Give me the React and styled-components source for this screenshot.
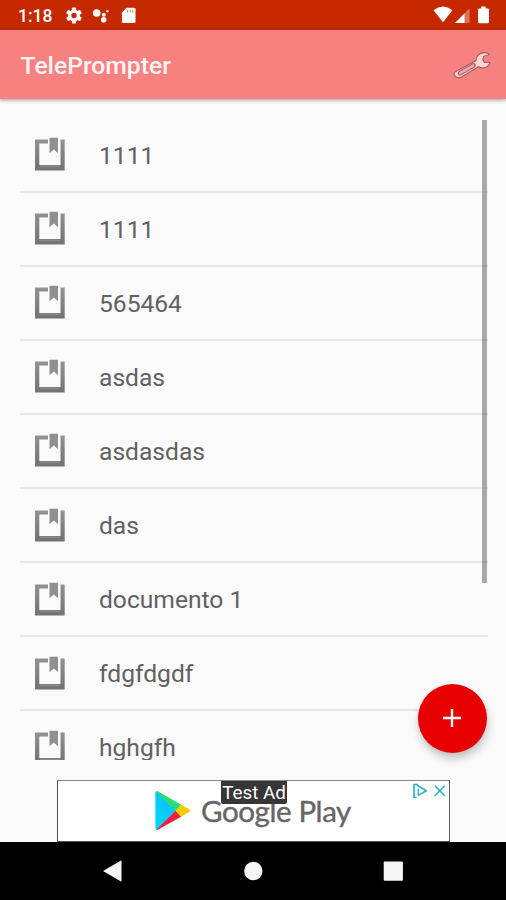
import React from 'react';
import styled, { createGlobalStyle } from 'styled-components';

const GlobalStyle = createGlobalStyle`
  * {
    box-sizing: border-box;
  }

  body {
    margin: 0;
    font-family: Roboto, "Liberation Sans", sans-serif;
    background-color: #fafafa;
  }
`;

const Screen = styled.div`
  position: relative;
  display: flex;
  flex-direction: column;
  width: 506px;
  height: 900px;
  overflow: hidden;
  background-color: #fafafa;
`;

const StatusBar = styled.div`
  display: flex;
  justify-content: space-between;
  flex: none;
  height: 30px;
  padding-left: 18px;
  background-color: #c62800;
  color: white;

  svg {
    display: block;
  }
`;

const Clock = styled.span`
  width: 47px;
  font-size: 17.5px;
  font-weight: 500;
  line-height: 32px;
`;

const StatusGroup = styled.div`
  display: flex;
`;

const AppBar = styled.header`
  display: flex;
  align-items: center;
  justify-content: space-between;
  flex: none;
  height: 68.5px;
  padding: 3px 13px 0 20.5px;
  background-color: #f78080;
  box-shadow: 0 1px 4px rgba(0, 0, 0, 0.4);
`;

const Title = styled.h1`
  margin: 0;
  color: #fff5f3;
  font-size: 24.7px;
  font-weight: 500;
  line-height: 30px;
`;

const Content = styled.main`
  display: flex;
  flex: none;
  height: 641.5px;
  margin: 20px 18px 0 20px;
  overflow: hidden;
`;

const List = styled.ul`
  flex: 1;
  margin: 0;
  padding: 0;
  list-style: none;
`;

const Item = styled.li`
  display: flex;
  align-items: center;
  height: 74.1px;
  padding: 0 0 0 14px;
  border-bottom: 2px solid #e6e6e6;
  color: #616161;

  svg {
    flex: none;
    margin: 0 33px 1px 0;
  }
`;

const ItemText = styled.span`
  padding-top: 2px;
  font-size: 24.6px;
  line-height: 32px;
`;

/* Drawn over the right end of the dividers */
const ScrollThumb = styled.div`
  flex: none;
  width: 5px;
  height: 463px;
  margin: 1px 1px 0 -6px;
  background-color: rgba(0, 0, 0, 0.32);
`;

const AddButton = styled.button`
  position: absolute;
  right: 19px;
  bottom: 147px;
  display: flex;
  align-items: center;
  justify-content: center;
  width: 69px;
  height: 69px;
  padding: 0 1px 1px 0;
  border: none;
  border-radius: 50%;
  background-color: #e60000;
  box-shadow: 1px 6px 8px rgba(0, 0, 0, 0.2), 0 1px 4px rgba(0, 0, 0, 0.06);
`;

const Ad = styled.div`
  position: relative;
  display: flex;
  align-items: center;
  flex: none;
  width: 393px;
  height: 62px;
  margin: 19.5px auto 0 57px;
  padding-left: 96px;
  border: 1px solid #555;
  border-top-color: #888;
  background-color: white;
`;

const AdText = styled.span`
  margin: 1px 0 0 9px;
  color: #666;
  font-family: Lato, Roboto, sans-serif;
  font-size: 29.5px;
  line-height: 34px;
  letter-spacing: -0.4px;
  white-space: nowrap;
  -webkit-text-stroke: 0.4px #666;
`;

const TestLabel = styled.span`
  position: absolute;
  top: 0;
  left: 163px;
  width: 66px;
  height: 23px;
  border-radius: 0 0 2px 2px;
  background-color: #363636;
  color: white;
  font-size: 18.8px;
  line-height: 24px;
  text-align: center;
`;

const AdChoices = styled.div`
  position: absolute;
  top: 1px;
  right: 1px;

  svg {
    display: block;
  }
`;

const NavBar = styled.nav`
  flex: 1;
  background-color: black;

  svg {
    display: block;
  }
`;

const documents = ['1111', '1111', '565464', 'asdas', 'asdasdas', 'das', 'documento 1', 'fdgfdgdf', 'hghgfh'];

const NotificationIcons = () => (
  <svg width="72" height="30" viewBox="0 0 72 30" fill="white">
    <g transform="translate(9 15.5)">
      <circle r="4.3" fill="none" stroke="white" strokeWidth="3.2" />
      {[0, 60, 120, 180, 240, 300].map((angle) => (
        <rect key={angle} x="-2.1" y="-8" width="4.2" height="4" rx="0.7" transform={`rotate(${angle})`} />
      ))}
    </g>
    <circle cx="31.7" cy="13" r="3.8" />
    <circle cx="38.8" cy="14.7" r="2" />
    <circle cx="42.4" cy="11.2" r="1.3" opacity="0.8" />
    <circle cx="38.7" cy="19.8" r="2.8" />
    <path d="M61.5 7.8H69a1.5 1.5 0 0 1 1.5 1.5v12.3a1.5 1.5 0 0 1-1.5 1.5H58.4a1.5 1.5 0 0 1-1.5-1.5v-9z" />
    <path d="M62.7 10.2v2.2M65.3 10.2v2.2M67.9 10.2v2.2" stroke="#c62800" strokeWidth="1" opacity="0.7" />
  </svg>
);

const SignalIcons = () => (
  <svg width="73" height="30" viewBox="0 0 73 30" fill="white">
    <path d="M0.5 10.2Q10 3 19.5 10.2L10 22.3z" />
    <path d="M22 23 L36.5 8.3V23z" opacity="0.35" />
    <path d="M22 23 L31.5 13.4V23z" />
    <path d="M48.2 6.5h4.4v2.1h2.2q1.2 0 1.2 1.2V22q0 1.3-1.2 1.3h-8.6q-1.2 0-1.2-1.3V9.8q0-1.2 1.2-1.2h2z" />
  </svg>
);

const WrenchIcon = () => (
  <svg width="40" height="32" viewBox="0 0 40 32">
    <path
      d="M2.2 21.8 23 10.6C23 6.4 26.2 3 31.2 2.7Q35 2.4 36.2 4.7L30.9 6.3 29.8 9.5 31.3 12.4 37 12.3Q35.7 17.2 30.8 17.8 28.1 18.1 25.5 16.7L9.3 26.6Q4.8 29 2.1 26.1 0 23.8 2.2 21.8z"
      fill="#fbd5d1"
      stroke="#a9605e"
      strokeWidth="1.2"
      strokeLinejoin="round"
    />
    <path d="M7 23.1 20.5 15.5" stroke="#a9605e" strokeWidth="4.8" strokeLinecap="round" />
    <path d="M7.3 23 20 15.8" stroke="#eeaaa6" strokeWidth="2.8" strokeLinecap="round" strokeDasharray="2.3 2" />
  </svg>
);

const BookIcon = () => (
  <svg width="32" height="36" viewBox="0 0 32 36">
    <defs>
      <linearGradient id="frame" x1="0" y1="0" x2="0" y2="1">
        <stop offset="0" stopColor="#929292" />
        <stop offset="1" stopColor="#727272" />
      </linearGradient>
    </defs>
    <path d="M1 3.5H14V7.5H5.3V29H26.5V3.5H30.7V34.5H1z" fill="url(#frame)" />
    <path d="M15.5 1.8H24V17.2L19.8 13.5 15.5 17.2z" fill="#909090" />
    <path d="M5.7 30.2H26" stroke="#999" strokeWidth="0.9" />
  </svg>
);

const PlayLogo = () => (
  <svg width="38" height="42" viewBox="0 0 38 42">
    <defs>
      <linearGradient id="playBlue" x1="1" y1="0" x2="0" y2="1">
        <stop offset="0" stopColor="#18b5ff" />
        <stop offset="1" stopColor="#00ddf8" />
      </linearGradient>
    </defs>
    <path d="M1.3 3Q1.3 1.1 3 1.5L22 20.5 3 39.7Q1.3 40 1.3 38z" fill="url(#playBlue)" />
    <path d="M2 1.2Q3 .7 4.3 1.4L27.5 15 21.8 20.9z" fill="#25df6d" />
    <path d="M2 39.9 21.8 20.5 27.5 26.4 4.3 39.6Q3 40.4 2 39.9z" fill="#ef203e" />
    <path d="M27 14.7 35.2 19.3Q37.5 20.6 35.2 22L27 26.7 21.3 20.7z" fill="#ffc900" />
  </svg>
);

const AdChoicesIcon = () => (
  <svg width="36" height="18" viewBox="0 0 36 18" fill="none" stroke="#29afc9" strokeWidth="1.6">
    <path d="M6 2.5H2V15.3H4.5M5 3.3 14.3 8.8 6 13.6" strokeLinejoin="round" />
    <path d="M6.2 6.6v6.6" strokeWidth="1.3" />
    <path d="M22.8 3.8 32.8 13.8M32.8 3.8 22.8 13.8" />
  </svg>
);

const App = () => {
  return (
    <>
      <GlobalStyle />
      <Screen>
        <StatusBar>
          <StatusGroup>
            <Clock>1:18</Clock>
            <NotificationIcons />
          </StatusGroup>
          <SignalIcons />
        </StatusBar>

        <AppBar>
          <Title>TelePrompter</Title>
          <WrenchIcon />
        </AppBar>

        <Content>
          <List>
            {documents.map((name, index) => (
              <Item key={index}>
                <BookIcon />
                <ItemText>{name}</ItemText>
              </Item>
            ))}
          </List>
          <ScrollThumb />
        </Content>

        <Ad>
          <PlayLogo />
          <AdText>Google Play</AdText>
          <TestLabel>Test Ad</TestLabel>
          <AdChoices>
            <AdChoicesIcon />
          </AdChoices>
        </Ad>

        <NavBar>
          <svg width="506" height="58" viewBox="0 0 506 58" fill="#f5f5f5">
            <path d="M103 29 121 18.5Q121.5 18.3 121.5 19V39Q121.5 39.7 121 39.4z" />
            <circle cx="253.3" cy="29" r="9.2" />
            <rect x="383.7" y="19.5" width="19.2" height="19.2" rx="1" />
          </svg>
        </NavBar>

        <AddButton aria-label="Add document">
          <svg width="20" height="20" viewBox="0 0 20 20" stroke="white" strokeWidth="2.4">
            <path d="M10 1v18M1 10h18" />
          </svg>
        </AddButton>
      </Screen>
    </>
  );
};

export default App;
